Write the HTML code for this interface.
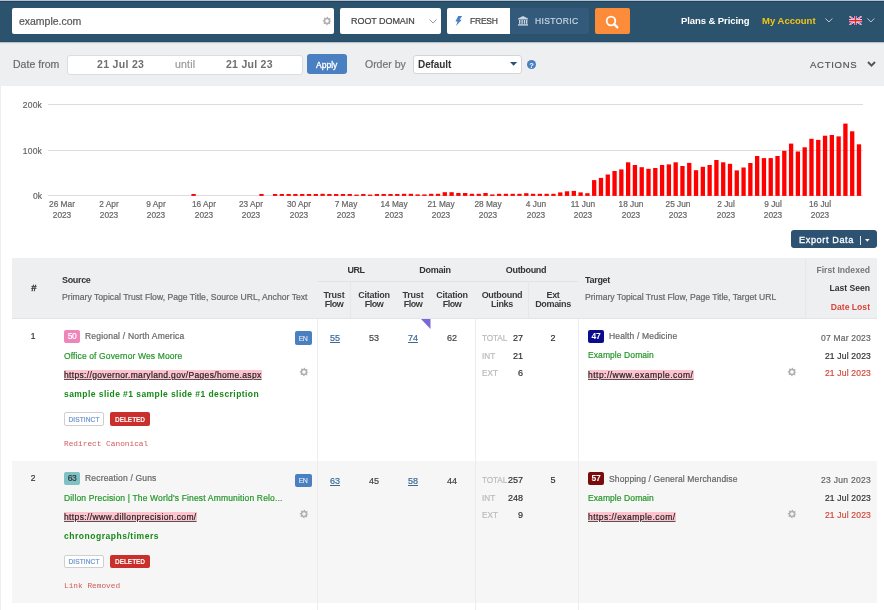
<!DOCTYPE html>
<html><head><meta charset="utf-8"><style>
html,body{margin:0;padding:0;width:884px;height:610px;overflow:hidden;background:#fff;font-family:'Liberation Sans', sans-serif;}
div.t{will-change:transform;}
</style></head><body>
<div style="position:absolute;left:0.00px;top:0.00px;width:884.00px;height:42.00px;background:#2c536d"></div><div style="position:absolute;left:0.00px;top:0.00px;width:884.00px;height:1.00px;background:#b6bec8"></div><div style="position:absolute;left:0.00px;top:1.00px;width:884.00px;height:1.00px;background:#1d4262"></div><div style="position:absolute;left:12.00px;top:8.00px;width:322.10px;height:26.00px;background:#fff;border-radius:2px"></div><div class="t" style="position:absolute;top:16.27px;left:19.40px;white-space:nowrap;line-height:10.5px;font-family:'Liberation Sans', sans-serif;font-size:10.5px;font-weight:normal;color:#555;letter-spacing:-0.023px;-webkit-text-stroke:0.2px #555;">example.com</div><div style="position:absolute;left:339.50px;top:8.00px;width:101.50px;height:26.00px;background:#fff;border-radius:2px"></div><div class="t" style="position:absolute;top:16.95px;left:351.30px;white-space:nowrap;line-height:9px;font-family:'Liberation Sans', sans-serif;font-size:9px;font-weight:normal;color:#444;letter-spacing:-0.059px;-webkit-text-stroke:0.2px #444;">ROOT DOMAIN</div><div style="position:absolute;left:447.00px;top:8.00px;width:63.00px;height:26.00px;background:#fff;border-radius:2px 0 0 2px"></div><div style="position:absolute;left:510.00px;top:8.00px;width:79.30px;height:26.00px;background:#33597b;border-radius:0 2px 2px 0"></div><div class="t" style="position:absolute;top:17.17px;left:470.40px;white-space:nowrap;line-height:8.5px;font-family:'Liberation Sans', sans-serif;font-size:8.5px;font-weight:normal;color:#444;letter-spacing:-0.223px;-webkit-text-stroke:0.2px #444;">FRESH</div><div class="t" style="position:absolute;top:17.17px;left:534.60px;white-space:nowrap;line-height:8.5px;font-family:'Liberation Sans', sans-serif;font-size:8.5px;font-weight:normal;color:#c9d5e1;letter-spacing:0.379px;-webkit-text-stroke:0.2px #c9d5e1;">HISTORIC</div><div style="position:absolute;left:595.20px;top:8.00px;width:34.70px;height:26.20px;background:#fd8c3a;border-radius:2px"></div><div class="t" style="position:absolute;top:16.23px;left:680.90px;white-space:nowrap;line-height:9.5px;font-family:'Liberation Sans', sans-serif;font-size:9.5px;font-weight:bold;color:#fff;letter-spacing:-0.079px;">Plans &amp; Pricing</div><div class="t" style="position:absolute;top:16.23px;left:762.20px;white-space:nowrap;line-height:9.5px;font-family:'Liberation Sans', sans-serif;font-size:9.5px;font-weight:bold;color:#f2c417;letter-spacing:0.012px;">My Account</div><div style="position:absolute;left:0.00px;top:42.00px;width:884.00px;height:44.00px;background:#eeeff1"></div><div style="position:absolute;left:0.00px;top:41.00px;width:884.00px;height:1.00px;background:#274b68"></div><div style="position:absolute;left:0.00px;top:42.00px;width:884.00px;height:1.00px;background:#bcc4cc"></div><div style="position:absolute;left:0.00px;top:43.00px;width:884.00px;height:1.00px;background:#e4e7ea"></div><div class="t" style="position:absolute;top:59.28px;left:12.60px;white-space:nowrap;line-height:10.5px;font-family:'Liberation Sans', sans-serif;font-size:10.5px;font-weight:normal;color:#6a6a6a;letter-spacing:0.032px;-webkit-text-stroke:0.2px #6a6a6a;">Date from</div><div style="position:absolute;left:66.80px;top:54.50px;width:236.40px;height:20.00px;background:#fff;border:1px solid #dcdde0;border-radius:3px;box-sizing:border-box"></div><div class="t" style="position:absolute;top:59.28px;left:97.40px;white-space:nowrap;line-height:10.5px;font-family:'Liberation Sans', sans-serif;font-size:10.5px;font-weight:bold;color:#6f6f6f;letter-spacing:0.314px;">21 Jul 23</div><div class="t" style="position:absolute;top:59.28px;left:174.70px;white-space:nowrap;line-height:10.5px;font-family:'Liberation Sans', sans-serif;font-size:10.5px;font-weight:normal;color:#999;letter-spacing:0.207px;-webkit-text-stroke:0.2px #999;">until</div><div class="t" style="position:absolute;top:59.28px;left:225.60px;white-space:nowrap;line-height:10.5px;font-family:'Liberation Sans', sans-serif;font-size:10.5px;font-weight:bold;color:#6f6f6f;letter-spacing:0.269px;">21 Jul 23</div><div style="position:absolute;left:307.30px;top:54.30px;width:40.00px;height:20.20px;background:#4a7fc1;border-radius:3px"></div><div class="t" style="position:absolute;top:61.18px;left:316.30px;white-space:nowrap;line-height:8.5px;font-family:'Liberation Sans', sans-serif;font-size:8.5px;font-weight:normal;color:#fff;letter-spacing:0.027px;-webkit-text-stroke:0.2px #fff;-webkit-text-stroke:0.3px #fff;">Apply</div><div class="t" style="position:absolute;top:59.28px;left:365.20px;white-space:nowrap;line-height:10.5px;font-family:'Liberation Sans', sans-serif;font-size:10.5px;font-weight:normal;color:#737373;letter-spacing:-0.020px;-webkit-text-stroke:0.2px #737373;">Order by</div><div style="position:absolute;left:413.40px;top:54.80px;width:108.30px;height:19.40px;background:#fff;border:1px solid #d4d5d8;border-radius:3px;box-sizing:border-box"></div><div class="t" style="position:absolute;top:60.00px;left:417.90px;white-space:nowrap;line-height:10px;font-family:'Liberation Sans', sans-serif;font-size:10px;font-weight:bold;color:#333;letter-spacing:-0.087px;">Default</div><div class="t" style="position:absolute;top:60.22px;left:810.00px;white-space:nowrap;line-height:9.5px;font-family:'Liberation Sans', sans-serif;font-size:9.5px;font-weight:normal;color:#555;letter-spacing:0.724px;-webkit-text-stroke:0.2px #555;">ACTIONS</div><div style="position:absolute;left:48.00px;top:104.10px;width:814.70px;height:1.00px;background:#dcdcdc"></div><div style="position:absolute;left:48.00px;top:149.90px;width:814.70px;height:1.00px;background:#dcdcdc"></div><div style="position:absolute;left:48.00px;top:194.90px;width:814.70px;height:1.00px;background:#dcdcdc"></div><div class="t" style="position:absolute;top:101.18px;left:-358.00px;width:400px;text-align:right;margin-right:0;white-space:nowrap;line-height:8.5px;font-family:'Liberation Sans', sans-serif;font-size:8.5px;font-weight:normal;color:#666;letter-spacing:0.191px;-webkit-text-stroke:0.2px #666;">200k</div><div class="t" style="position:absolute;top:147.18px;left:-358.00px;width:400px;text-align:right;margin-right:0;white-space:nowrap;line-height:8.5px;font-family:'Liberation Sans', sans-serif;font-size:8.5px;font-weight:normal;color:#666;letter-spacing:0.191px;-webkit-text-stroke:0.2px #666;">100k</div><div class="t" style="position:absolute;top:192.18px;left:-358.00px;width:400px;text-align:right;white-space:nowrap;line-height:8.5px;font-family:'Liberation Sans', sans-serif;font-size:8.5px;font-weight:normal;color:#666;-webkit-text-stroke:0.2px #666;">0k</div><div class="t" style="position:absolute;top:200.25px;left:-138.50px;width:400px;text-align:center;white-space:nowrap;line-height:8.3px;font-family:'Liberation Sans', sans-serif;font-size:8.3px;font-weight:normal;color:#666;-webkit-text-stroke:0.2px #666;">26 Mar</div><div class="t" style="position:absolute;top:211.25px;left:-138.50px;width:400px;text-align:center;white-space:nowrap;line-height:8.3px;font-family:'Liberation Sans', sans-serif;font-size:8.3px;font-weight:normal;color:#666;-webkit-text-stroke:0.2px #666;">2023</div><div class="t" style="position:absolute;top:200.25px;left:-91.07px;width:400px;text-align:center;white-space:nowrap;line-height:8.3px;font-family:'Liberation Sans', sans-serif;font-size:8.3px;font-weight:normal;color:#666;-webkit-text-stroke:0.2px #666;">2 Apr</div><div class="t" style="position:absolute;top:211.25px;left:-91.07px;width:400px;text-align:center;white-space:nowrap;line-height:8.3px;font-family:'Liberation Sans', sans-serif;font-size:8.3px;font-weight:normal;color:#666;-webkit-text-stroke:0.2px #666;">2023</div><div class="t" style="position:absolute;top:200.25px;left:-43.64px;width:400px;text-align:center;white-space:nowrap;line-height:8.3px;font-family:'Liberation Sans', sans-serif;font-size:8.3px;font-weight:normal;color:#666;-webkit-text-stroke:0.2px #666;">9 Apr</div><div class="t" style="position:absolute;top:211.25px;left:-43.64px;width:400px;text-align:center;white-space:nowrap;line-height:8.3px;font-family:'Liberation Sans', sans-serif;font-size:8.3px;font-weight:normal;color:#666;-webkit-text-stroke:0.2px #666;">2023</div><div class="t" style="position:absolute;top:200.25px;left:3.79px;width:400px;text-align:center;white-space:nowrap;line-height:8.3px;font-family:'Liberation Sans', sans-serif;font-size:8.3px;font-weight:normal;color:#666;-webkit-text-stroke:0.2px #666;">16 Apr</div><div class="t" style="position:absolute;top:211.25px;left:3.79px;width:400px;text-align:center;white-space:nowrap;line-height:8.3px;font-family:'Liberation Sans', sans-serif;font-size:8.3px;font-weight:normal;color:#666;-webkit-text-stroke:0.2px #666;">2023</div><div class="t" style="position:absolute;top:200.25px;left:51.22px;width:400px;text-align:center;white-space:nowrap;line-height:8.3px;font-family:'Liberation Sans', sans-serif;font-size:8.3px;font-weight:normal;color:#666;-webkit-text-stroke:0.2px #666;">23 Apr</div><div class="t" style="position:absolute;top:211.25px;left:51.22px;width:400px;text-align:center;white-space:nowrap;line-height:8.3px;font-family:'Liberation Sans', sans-serif;font-size:8.3px;font-weight:normal;color:#666;-webkit-text-stroke:0.2px #666;">2023</div><div class="t" style="position:absolute;top:200.25px;left:98.65px;width:400px;text-align:center;white-space:nowrap;line-height:8.3px;font-family:'Liberation Sans', sans-serif;font-size:8.3px;font-weight:normal;color:#666;-webkit-text-stroke:0.2px #666;">30 Apr</div><div class="t" style="position:absolute;top:211.25px;left:98.65px;width:400px;text-align:center;white-space:nowrap;line-height:8.3px;font-family:'Liberation Sans', sans-serif;font-size:8.3px;font-weight:normal;color:#666;-webkit-text-stroke:0.2px #666;">2023</div><div class="t" style="position:absolute;top:200.25px;left:146.08px;width:400px;text-align:center;white-space:nowrap;line-height:8.3px;font-family:'Liberation Sans', sans-serif;font-size:8.3px;font-weight:normal;color:#666;-webkit-text-stroke:0.2px #666;">7 May</div><div class="t" style="position:absolute;top:211.25px;left:146.08px;width:400px;text-align:center;white-space:nowrap;line-height:8.3px;font-family:'Liberation Sans', sans-serif;font-size:8.3px;font-weight:normal;color:#666;-webkit-text-stroke:0.2px #666;">2023</div><div class="t" style="position:absolute;top:200.25px;left:193.51px;width:400px;text-align:center;white-space:nowrap;line-height:8.3px;font-family:'Liberation Sans', sans-serif;font-size:8.3px;font-weight:normal;color:#666;-webkit-text-stroke:0.2px #666;">14 May</div><div class="t" style="position:absolute;top:211.25px;left:193.51px;width:400px;text-align:center;white-space:nowrap;line-height:8.3px;font-family:'Liberation Sans', sans-serif;font-size:8.3px;font-weight:normal;color:#666;-webkit-text-stroke:0.2px #666;">2023</div><div class="t" style="position:absolute;top:200.25px;left:240.94px;width:400px;text-align:center;white-space:nowrap;line-height:8.3px;font-family:'Liberation Sans', sans-serif;font-size:8.3px;font-weight:normal;color:#666;-webkit-text-stroke:0.2px #666;">21 May</div><div class="t" style="position:absolute;top:211.25px;left:240.94px;width:400px;text-align:center;white-space:nowrap;line-height:8.3px;font-family:'Liberation Sans', sans-serif;font-size:8.3px;font-weight:normal;color:#666;-webkit-text-stroke:0.2px #666;">2023</div><div class="t" style="position:absolute;top:200.25px;left:288.37px;width:400px;text-align:center;white-space:nowrap;line-height:8.3px;font-family:'Liberation Sans', sans-serif;font-size:8.3px;font-weight:normal;color:#666;-webkit-text-stroke:0.2px #666;">28 May</div><div class="t" style="position:absolute;top:211.25px;left:288.37px;width:400px;text-align:center;white-space:nowrap;line-height:8.3px;font-family:'Liberation Sans', sans-serif;font-size:8.3px;font-weight:normal;color:#666;-webkit-text-stroke:0.2px #666;">2023</div><div class="t" style="position:absolute;top:200.25px;left:335.80px;width:400px;text-align:center;white-space:nowrap;line-height:8.3px;font-family:'Liberation Sans', sans-serif;font-size:8.3px;font-weight:normal;color:#666;-webkit-text-stroke:0.2px #666;">4 Jun</div><div class="t" style="position:absolute;top:211.25px;left:335.80px;width:400px;text-align:center;white-space:nowrap;line-height:8.3px;font-family:'Liberation Sans', sans-serif;font-size:8.3px;font-weight:normal;color:#666;-webkit-text-stroke:0.2px #666;">2023</div><div class="t" style="position:absolute;top:200.25px;left:383.23px;width:400px;text-align:center;white-space:nowrap;line-height:8.3px;font-family:'Liberation Sans', sans-serif;font-size:8.3px;font-weight:normal;color:#666;-webkit-text-stroke:0.2px #666;">11 Jun</div><div class="t" style="position:absolute;top:211.25px;left:383.23px;width:400px;text-align:center;white-space:nowrap;line-height:8.3px;font-family:'Liberation Sans', sans-serif;font-size:8.3px;font-weight:normal;color:#666;-webkit-text-stroke:0.2px #666;">2023</div><div class="t" style="position:absolute;top:200.25px;left:430.66px;width:400px;text-align:center;white-space:nowrap;line-height:8.3px;font-family:'Liberation Sans', sans-serif;font-size:8.3px;font-weight:normal;color:#666;-webkit-text-stroke:0.2px #666;">18 Jun</div><div class="t" style="position:absolute;top:211.25px;left:430.66px;width:400px;text-align:center;white-space:nowrap;line-height:8.3px;font-family:'Liberation Sans', sans-serif;font-size:8.3px;font-weight:normal;color:#666;-webkit-text-stroke:0.2px #666;">2023</div><div class="t" style="position:absolute;top:200.25px;left:478.09px;width:400px;text-align:center;white-space:nowrap;line-height:8.3px;font-family:'Liberation Sans', sans-serif;font-size:8.3px;font-weight:normal;color:#666;-webkit-text-stroke:0.2px #666;">25 Jun</div><div class="t" style="position:absolute;top:211.25px;left:478.09px;width:400px;text-align:center;white-space:nowrap;line-height:8.3px;font-family:'Liberation Sans', sans-serif;font-size:8.3px;font-weight:normal;color:#666;-webkit-text-stroke:0.2px #666;">2023</div><div class="t" style="position:absolute;top:200.25px;left:525.52px;width:400px;text-align:center;white-space:nowrap;line-height:8.3px;font-family:'Liberation Sans', sans-serif;font-size:8.3px;font-weight:normal;color:#666;-webkit-text-stroke:0.2px #666;">2 Jul</div><div class="t" style="position:absolute;top:211.25px;left:525.52px;width:400px;text-align:center;white-space:nowrap;line-height:8.3px;font-family:'Liberation Sans', sans-serif;font-size:8.3px;font-weight:normal;color:#666;-webkit-text-stroke:0.2px #666;">2023</div><div class="t" style="position:absolute;top:200.25px;left:572.95px;width:400px;text-align:center;white-space:nowrap;line-height:8.3px;font-family:'Liberation Sans', sans-serif;font-size:8.3px;font-weight:normal;color:#666;-webkit-text-stroke:0.2px #666;">9 Jul</div><div class="t" style="position:absolute;top:211.25px;left:572.95px;width:400px;text-align:center;white-space:nowrap;line-height:8.3px;font-family:'Liberation Sans', sans-serif;font-size:8.3px;font-weight:normal;color:#666;-webkit-text-stroke:0.2px #666;">2023</div><div class="t" style="position:absolute;top:200.25px;left:620.38px;width:400px;text-align:center;white-space:nowrap;line-height:8.3px;font-family:'Liberation Sans', sans-serif;font-size:8.3px;font-weight:normal;color:#666;-webkit-text-stroke:0.2px #666;">16 Jul</div><div class="t" style="position:absolute;top:211.25px;left:620.38px;width:400px;text-align:center;white-space:nowrap;line-height:8.3px;font-family:'Liberation Sans', sans-serif;font-size:8.3px;font-weight:normal;color:#666;-webkit-text-stroke:0.2px #666;">2023</div><div style="position:absolute;left:791.20px;top:229.90px;width:85.60px;height:18.40px;background:#2d5272;border-radius:3px"></div><div class="t" style="position:absolute;top:235.88px;left:799.40px;white-space:nowrap;line-height:9.2px;font-family:'Liberation Sans', sans-serif;font-size:9.2px;font-weight:normal;color:#fff;letter-spacing:0.580px;-webkit-text-stroke:0.2px #fff;-webkit-text-stroke:0.3px #fff;">Export Data</div><div style="position:absolute;left:12.20px;top:258.00px;width:864.60px;height:60.50px;background:#eeeff1;border-bottom:1px solid #e3e4e7;box-sizing:border-box"></div><div class="t" style="position:absolute;top:283.23px;left:-166.50px;width:400px;text-align:center;white-space:nowrap;line-height:9.5px;font-family:'Liberation Sans', sans-serif;font-size:9.5px;font-weight:bold;color:#333;-webkit-text-stroke:0.3px #333;">#</div><div class="t" style="position:absolute;top:275.95px;left:61.80px;white-space:nowrap;line-height:9px;font-family:'Liberation Sans', sans-serif;font-size:9px;font-weight:bold;color:#333;letter-spacing:-0.336px;">Source</div><div class="t" style="position:absolute;top:293.09px;left:61.50px;white-space:nowrap;line-height:8.6px;font-family:'Liberation Sans', sans-serif;font-size:8.6px;font-weight:normal;color:#666;letter-spacing:0.020px;-webkit-text-stroke:0.2px #666;">Primary Topical Trust Flow, Page Title, Source URL, Anchor Text</div><div class="t" style="position:absolute;top:265.95px;left:156.30px;width:400px;text-align:center;white-space:nowrap;line-height:9px;font-family:'Liberation Sans', sans-serif;font-size:9px;font-weight:bold;color:#333;letter-spacing:-0.533px;">URL</div><div class="t" style="position:absolute;top:265.95px;left:235.30px;width:400px;text-align:center;white-space:nowrap;line-height:9px;font-family:'Liberation Sans', sans-serif;font-size:9px;font-weight:bold;color:#333;letter-spacing:-0.269px;">Domain</div><div class="t" style="position:absolute;top:265.95px;left:326.30px;width:400px;text-align:center;white-space:nowrap;line-height:9px;font-family:'Liberation Sans', sans-serif;font-size:9px;font-weight:bold;color:#333;letter-spacing:-0.336px;">Outbound</div><div class="t" style="position:absolute;top:290.95px;left:134.20px;width:400px;text-align:center;white-space:nowrap;line-height:9px;font-family:'Liberation Sans', sans-serif;font-size:9px;font-weight:bold;color:#3a3a3a;letter-spacing:-0.243px;">Trust</div><div class="t" style="position:absolute;top:299.95px;left:134.20px;width:400px;text-align:center;white-space:nowrap;line-height:9px;font-family:'Liberation Sans', sans-serif;font-size:9px;font-weight:bold;color:#3a3a3a;letter-spacing:-0.475px;">Flow</div><div class="t" style="position:absolute;top:290.95px;left:173.50px;width:400px;text-align:center;white-space:nowrap;line-height:9px;font-family:'Liberation Sans', sans-serif;font-size:9px;font-weight:bold;color:#3a3a3a;letter-spacing:-0.250px;">Citation</div><div class="t" style="position:absolute;top:299.95px;left:173.50px;width:400px;text-align:center;white-space:nowrap;line-height:9px;font-family:'Liberation Sans', sans-serif;font-size:9px;font-weight:bold;color:#3a3a3a;letter-spacing:-0.475px;">Flow</div><div class="t" style="position:absolute;top:290.95px;left:213.20px;width:400px;text-align:center;white-space:nowrap;line-height:9px;font-family:'Liberation Sans', sans-serif;font-size:9px;font-weight:bold;color:#3a3a3a;letter-spacing:-0.243px;">Trust</div><div class="t" style="position:absolute;top:299.95px;left:213.20px;width:400px;text-align:center;white-space:nowrap;line-height:9px;font-family:'Liberation Sans', sans-serif;font-size:9px;font-weight:bold;color:#3a3a3a;letter-spacing:-0.475px;">Flow</div><div class="t" style="position:absolute;top:290.95px;left:252.20px;width:400px;text-align:center;white-space:nowrap;line-height:9px;font-family:'Liberation Sans', sans-serif;font-size:9px;font-weight:bold;color:#3a3a3a;letter-spacing:-0.250px;">Citation</div><div class="t" style="position:absolute;top:299.95px;left:252.20px;width:400px;text-align:center;white-space:nowrap;line-height:9px;font-family:'Liberation Sans', sans-serif;font-size:9px;font-weight:bold;color:#3a3a3a;letter-spacing:-0.475px;">Flow</div><div class="t" style="position:absolute;top:290.95px;left:301.50px;width:400px;text-align:center;white-space:nowrap;line-height:9px;font-family:'Liberation Sans', sans-serif;font-size:9px;font-weight:bold;color:#3a3a3a;letter-spacing:-0.286px;">Outbound</div><div class="t" style="position:absolute;top:299.95px;left:301.50px;width:400px;text-align:center;white-space:nowrap;line-height:9px;font-family:'Liberation Sans', sans-serif;font-size:9px;font-weight:bold;color:#3a3a3a;letter-spacing:-0.323px;">Links</div><div class="t" style="position:absolute;top:290.95px;left:353.20px;width:400px;text-align:center;white-space:nowrap;line-height:9px;font-family:'Liberation Sans', sans-serif;font-size:9px;font-weight:bold;color:#3a3a3a;letter-spacing:-0.372px;">Ext</div><div class="t" style="position:absolute;top:299.95px;left:353.20px;width:400px;text-align:center;white-space:nowrap;line-height:9px;font-family:'Liberation Sans', sans-serif;font-size:9px;font-weight:bold;color:#3a3a3a;letter-spacing:-0.345px;">Domains</div><div style="position:absolute;left:317.30px;top:281.00px;width:260.40px;height:1.00px;background:#e2e3e6"></div><div style="position:absolute;left:350.00px;top:281.00px;width:1.00px;height:37.00px;background:#e6e7ea"></div><div style="position:absolute;left:528.30px;top:281.00px;width:1.00px;height:37.00px;background:#e6e7ea"></div><div style="position:absolute;left:804.60px;top:258.00px;width:1.00px;height:60.00px;background:#e6e7ea"></div><div class="t" style="position:absolute;top:275.95px;left:584.80px;white-space:nowrap;line-height:9px;font-family:'Liberation Sans', sans-serif;font-size:9px;font-weight:bold;color:#333;letter-spacing:-0.307px;">Target</div><div class="t" style="position:absolute;top:293.09px;left:584.80px;white-space:nowrap;line-height:8.6px;font-family:'Liberation Sans', sans-serif;font-size:8.6px;font-weight:normal;color:#666;-webkit-text-stroke:0.2px #666;">Primary Topical Trust Flow, Page Title, Target URL</div><div class="t" style="position:absolute;top:266.09px;left:470.20px;width:400px;text-align:right;margin-right:0;white-space:nowrap;line-height:8.6px;font-family:'Liberation Sans', sans-serif;font-size:8.6px;font-weight:bold;color:#777;letter-spacing:0.009px;">First Indexed</div><div class="t" style="position:absolute;top:284.09px;left:470.20px;width:400px;text-align:right;white-space:nowrap;line-height:8.6px;font-family:'Liberation Sans', sans-serif;font-size:8.6px;font-weight:bold;color:#333;">Last Seen</div><div class="t" style="position:absolute;top:303.09px;left:470.20px;width:400px;text-align:right;white-space:nowrap;line-height:8.6px;font-family:'Liberation Sans', sans-serif;font-size:8.6px;font-weight:bold;color:#d9443a;">Date Lost</div><div class="t" style="position:absolute;top:332.17px;left:-166.70px;width:400px;text-align:center;white-space:nowrap;line-height:8.5px;font-family:'Liberation Sans', sans-serif;font-size:8.5px;font-weight:normal;color:#333;-webkit-text-stroke:0.2px #333;">1</div><div style="position:absolute;left:64.30px;top:330.00px;width:15.80px;height:12.60px;background:#ef86bb;border-radius:2px"></div><div class="t" style="position:absolute;top:332.17px;left:-127.90px;width:400px;text-align:center;white-space:nowrap;line-height:8.5px;font-family:'Liberation Sans', sans-serif;font-size:8.5px;font-weight:normal;color:#fff;letter-spacing:-0.534px;-webkit-text-stroke:0.2px #fff;">50</div><div class="t" style="position:absolute;top:332.17px;left:85.20px;white-space:nowrap;line-height:8.5px;font-family:'Liberation Sans', sans-serif;font-size:8.5px;font-weight:normal;color:#666;letter-spacing:0.204px;-webkit-text-stroke:0.2px #666;">Regional / North America</div><div style="position:absolute;left:295.20px;top:331.20px;width:16.40px;height:13.50px;background:#4a7fc1;border-radius:2px"></div><div class="t" style="position:absolute;top:335.25px;left:103.30px;width:400px;text-align:center;white-space:nowrap;line-height:7px;font-family:'Liberation Sans', sans-serif;font-size:7px;font-weight:normal;color:#e6edf6;letter-spacing:-0.617px;-webkit-text-stroke:0.2px #e6edf6;-webkit-text-stroke:0.1px #e6edf6;">EN</div><div class="t" style="position:absolute;top:352.17px;left:64.40px;white-space:nowrap;line-height:8.5px;font-family:'Liberation Sans', sans-serif;font-size:8.5px;font-weight:normal;color:#24962a;letter-spacing:0.123px;-webkit-text-stroke:0.2px #24962a;">Office of Governor Wes Moore</div><div style="position:absolute;left:64.40px;top:370.00px;width:197.60px;height:9.00px;background:#ffc2cf"></div><div class="t" style="position:absolute;top:371.17px;left:64.40px;white-space:nowrap;line-height:8.5px;font-family:'Liberation Sans', sans-serif;font-size:8.5px;font-weight:normal;color:#222;letter-spacing:0.338px;-webkit-text-stroke:0.2px #222;text-decoration:underline;text-decoration-color:#555;">https://governor.maryland.gov/Pages/home.aspx</div><div class="t" style="position:absolute;top:390.17px;left:64.40px;white-space:nowrap;line-height:8.5px;font-family:'Liberation Sans', sans-serif;font-size:8.5px;font-weight:bold;color:#168a16;letter-spacing:0.439px;">sample slide #1 sample slide #1 description</div><div style="position:absolute;left:64.40px;top:412.20px;width:39.50px;height:13.60px;background:#fff;border:1px solid #cfcfcf;border-radius:2px;box-sizing:border-box"></div><div class="t" style="position:absolute;top:416.99px;left:-115.85px;width:400px;text-align:center;white-space:nowrap;line-height:6.6px;font-family:'Liberation Sans', sans-serif;font-size:6.6px;font-weight:normal;color:#6a93cc;letter-spacing:0.074px;-webkit-text-stroke:0.2px #6a93cc;">DISTINCT</div><div style="position:absolute;left:109.70px;top:412.20px;width:40.00px;height:13.60px;background:#c9302c;border-radius:2px"></div><div class="t" style="position:absolute;top:416.99px;left:-70.30px;width:400px;text-align:center;white-space:nowrap;line-height:6.6px;font-family:'Liberation Sans', sans-serif;font-size:6.6px;font-weight:bold;color:#fff;letter-spacing:-0.112px;">DELETED</div><div class="t" style="position:absolute;top:440.77px;left:64.40px;white-space:nowrap;line-height:7.8px;font-family:'Liberation Mono', monospace;font-size:7.8px;font-weight:normal;color:#d25a5a;">Redirect Canonical</div><div class="t" style="position:absolute;top:333.95px;left:134.50px;width:400px;text-align:center;white-space:nowrap;line-height:9px;font-family:'Liberation Sans', sans-serif;font-size:9px;font-weight:normal;color:#3b6a98;-webkit-text-stroke:0.2px #3b6a98;text-decoration:underline;">55</div><div class="t" style="position:absolute;top:333.95px;left:173.50px;width:400px;text-align:center;white-space:nowrap;line-height:9px;font-family:'Liberation Sans', sans-serif;font-size:9px;font-weight:normal;color:#444;-webkit-text-stroke:0.2px #444;">53</div><div class="t" style="position:absolute;top:333.95px;left:212.80px;width:400px;text-align:center;white-space:nowrap;line-height:9px;font-family:'Liberation Sans', sans-serif;font-size:9px;font-weight:normal;color:#3b6a98;-webkit-text-stroke:0.2px #3b6a98;text-decoration:underline;">74</div><div class="t" style="position:absolute;top:333.95px;left:252.10px;width:400px;text-align:center;white-space:nowrap;line-height:9px;font-family:'Liberation Sans', sans-serif;font-size:9px;font-weight:normal;color:#444;-webkit-text-stroke:0.2px #444;">62</div><div class="t" style="position:absolute;top:334.73px;left:481.50px;white-space:nowrap;line-height:8.2px;font-family:'Liberation Sans', sans-serif;font-size:8.2px;font-weight:normal;color:#bbb;letter-spacing:-0.088px;-webkit-text-stroke:0.2px #bbb;">TOTAL</div><div class="t" style="position:absolute;top:352.73px;left:481.50px;white-space:nowrap;line-height:8.2px;font-family:'Liberation Sans', sans-serif;font-size:8.2px;font-weight:normal;color:#bbb;-webkit-text-stroke:0.2px #bbb;">INT</div><div class="t" style="position:absolute;top:369.73px;left:481.50px;white-space:nowrap;line-height:8.2px;font-family:'Liberation Sans', sans-serif;font-size:8.2px;font-weight:normal;color:#bbb;-webkit-text-stroke:0.2px #bbb;">EXT</div><div class="t" style="position:absolute;top:333.95px;left:122.90px;width:400px;text-align:right;white-space:nowrap;line-height:9px;font-family:'Liberation Sans', sans-serif;font-size:9px;font-weight:normal;color:#333;-webkit-text-stroke:0.2px #333;">27</div><div class="t" style="position:absolute;top:351.95px;left:122.90px;width:400px;text-align:right;white-space:nowrap;line-height:9px;font-family:'Liberation Sans', sans-serif;font-size:9px;font-weight:normal;color:#333;-webkit-text-stroke:0.2px #333;">21</div><div class="t" style="position:absolute;top:368.95px;left:122.90px;width:400px;text-align:right;white-space:nowrap;line-height:9px;font-family:'Liberation Sans', sans-serif;font-size:9px;font-weight:normal;color:#333;-webkit-text-stroke:0.2px #333;">6</div><div class="t" style="position:absolute;top:333.95px;left:353.20px;width:400px;text-align:center;white-space:nowrap;line-height:9px;font-family:'Liberation Sans', sans-serif;font-size:9px;font-weight:normal;color:#333;-webkit-text-stroke:0.2px #333;">2</div><div style="position:absolute;left:588.20px;top:329.60px;width:15.60px;height:13.00px;background:#0b0b8e;border-radius:2px"></div><div class="t" style="position:absolute;top:332.17px;left:396.00px;width:400px;text-align:center;white-space:nowrap;line-height:8.5px;font-family:'Liberation Sans', sans-serif;font-size:8.5px;font-weight:bold;color:#fff;letter-spacing:-0.134px;">47</div><div class="t" style="position:absolute;top:332.17px;left:608.80px;white-space:nowrap;line-height:8.5px;font-family:'Liberation Sans', sans-serif;font-size:8.5px;font-weight:normal;color:#666;letter-spacing:0.155px;-webkit-text-stroke:0.2px #666;">Health / Medicine</div><div class="t" style="position:absolute;top:351.17px;left:588.20px;white-space:nowrap;line-height:8.5px;font-family:'Liberation Sans', sans-serif;font-size:8.5px;font-weight:normal;color:#24962a;letter-spacing:0.083px;-webkit-text-stroke:0.2px #24962a;">Example Domain</div><div style="position:absolute;left:588.20px;top:369.80px;width:105.40px;height:9.20px;background:#ffc2cf"></div><div class="t" style="position:absolute;top:371.17px;left:588.20px;white-space:nowrap;line-height:8.5px;font-family:'Liberation Sans', sans-serif;font-size:8.5px;font-weight:normal;color:#222;letter-spacing:0.475px;-webkit-text-stroke:0.2px #222;text-decoration:underline;text-decoration-color:#555;">http://www.example.com/</div><div class="t" style="position:absolute;top:334.17px;left:470.90px;width:400px;text-align:right;margin-right:0;white-space:nowrap;line-height:8.5px;font-family:'Liberation Sans', sans-serif;font-size:8.5px;font-weight:normal;color:#666;letter-spacing:0.206px;-webkit-text-stroke:0.2px #666;">07 Mar 2023</div><div class="t" style="position:absolute;top:352.17px;left:470.90px;width:400px;text-align:right;margin-right:0;white-space:nowrap;line-height:8.5px;font-family:'Liberation Sans', sans-serif;font-size:8.5px;font-weight:normal;color:#333;letter-spacing:0.195px;-webkit-text-stroke:0.2px #333;">21 Jul 2023</div><div class="t" style="position:absolute;top:369.17px;left:470.90px;width:400px;text-align:right;margin-right:0;white-space:nowrap;line-height:8.5px;font-family:'Liberation Sans', sans-serif;font-size:8.5px;font-weight:normal;color:#d04a3c;letter-spacing:0.195px;-webkit-text-stroke:0.2px #d04a3c;">21 Jul 2023</div><svg style="position:absolute;left:299.40px;top:367.00px" width="10" height="10" viewBox="-5 -5 10 10"><circle r="3.4" fill="none" stroke="#b0b0b0" stroke-width="1.6" stroke-dasharray="1.3 1.37" stroke-dashoffset="0.65"/><circle r="2.5" fill="none" stroke="#b0b0b0" stroke-width="1.5"/></svg><svg style="position:absolute;left:787.20px;top:367.00px" width="10" height="10" viewBox="-5 -5 10 10"><circle r="3.4" fill="none" stroke="#b0b0b0" stroke-width="1.6" stroke-dasharray="1.3 1.37" stroke-dashoffset="0.65"/><circle r="2.5" fill="none" stroke="#b0b0b0" stroke-width="1.5"/></svg><div style="position:absolute;left:12.10px;top:460.90px;width:864.90px;height:142.50px;background:#f6f6f6"></div><div class="t" style="position:absolute;top:474.17px;left:-166.70px;width:400px;text-align:center;white-space:nowrap;line-height:8.5px;font-family:'Liberation Sans', sans-serif;font-size:8.5px;font-weight:normal;color:#333;-webkit-text-stroke:0.2px #333;">2</div><div style="position:absolute;left:64.30px;top:472.40px;width:15.80px;height:12.60px;background:#80c1c6;border-radius:2px"></div><div class="t" style="position:absolute;top:474.17px;left:-127.90px;width:400px;text-align:center;white-space:nowrap;line-height:8.5px;font-family:'Liberation Sans', sans-serif;font-size:8.5px;font-weight:normal;color:#333;letter-spacing:-0.534px;-webkit-text-stroke:0.2px #333;">63</div><div class="t" style="position:absolute;top:474.17px;left:85.20px;white-space:nowrap;line-height:8.5px;font-family:'Liberation Sans', sans-serif;font-size:8.5px;font-weight:normal;color:#666;letter-spacing:0.176px;-webkit-text-stroke:0.2px #666;">Recreation / Guns</div><div style="position:absolute;left:295.20px;top:473.60px;width:16.40px;height:13.50px;background:#4a7fc1;border-radius:2px"></div><div class="t" style="position:absolute;top:477.25px;left:103.30px;width:400px;text-align:center;white-space:nowrap;line-height:7px;font-family:'Liberation Sans', sans-serif;font-size:7px;font-weight:normal;color:#e6edf6;letter-spacing:-0.617px;-webkit-text-stroke:0.2px #e6edf6;-webkit-text-stroke:0.1px #e6edf6;">EN</div><div class="t" style="position:absolute;top:494.17px;left:64.40px;white-space:nowrap;line-height:8.5px;font-family:'Liberation Sans', sans-serif;font-size:8.5px;font-weight:normal;color:#24962a;letter-spacing:0.162px;-webkit-text-stroke:0.2px #24962a;">Dillon Precision | The World&#x27;s Finest Ammunition Relo...</div><div style="position:absolute;left:64.40px;top:512.40px;width:132.60px;height:9.00px;background:#ffc2cf"></div><div class="t" style="position:absolute;top:513.17px;left:64.40px;white-space:nowrap;line-height:8.5px;font-family:'Liberation Sans', sans-serif;font-size:8.5px;font-weight:normal;color:#222;letter-spacing:0.379px;-webkit-text-stroke:0.2px #222;text-decoration:underline;text-decoration-color:#555;">https://www.dillonprecision.com/</div><div class="t" style="position:absolute;top:532.17px;left:64.40px;white-space:nowrap;line-height:8.5px;font-family:'Liberation Sans', sans-serif;font-size:8.5px;font-weight:bold;color:#168a16;letter-spacing:0.525px;">chronographs/timers</div><div style="position:absolute;left:64.40px;top:554.60px;width:39.50px;height:13.60px;background:#fff;border:1px solid #cfcfcf;border-radius:2px;box-sizing:border-box"></div><div class="t" style="position:absolute;top:558.99px;left:-115.85px;width:400px;text-align:center;white-space:nowrap;line-height:6.6px;font-family:'Liberation Sans', sans-serif;font-size:6.6px;font-weight:normal;color:#6a93cc;letter-spacing:0.074px;-webkit-text-stroke:0.2px #6a93cc;">DISTINCT</div><div style="position:absolute;left:109.70px;top:554.60px;width:40.00px;height:13.60px;background:#c9302c;border-radius:2px"></div><div class="t" style="position:absolute;top:558.99px;left:-70.30px;width:400px;text-align:center;white-space:nowrap;line-height:6.6px;font-family:'Liberation Sans', sans-serif;font-size:6.6px;font-weight:bold;color:#fff;letter-spacing:-0.112px;">DELETED</div><div class="t" style="position:absolute;top:582.77px;left:64.40px;white-space:nowrap;line-height:7.8px;font-family:'Liberation Mono', monospace;font-size:7.8px;font-weight:normal;color:#d25a5a;">Link Removed</div><div class="t" style="position:absolute;top:476.95px;left:134.50px;width:400px;text-align:center;white-space:nowrap;line-height:9px;font-family:'Liberation Sans', sans-serif;font-size:9px;font-weight:normal;color:#3b6a98;-webkit-text-stroke:0.2px #3b6a98;text-decoration:underline;">63</div><div class="t" style="position:absolute;top:476.95px;left:173.50px;width:400px;text-align:center;white-space:nowrap;line-height:9px;font-family:'Liberation Sans', sans-serif;font-size:9px;font-weight:normal;color:#444;-webkit-text-stroke:0.2px #444;">45</div><div class="t" style="position:absolute;top:476.95px;left:212.80px;width:400px;text-align:center;white-space:nowrap;line-height:9px;font-family:'Liberation Sans', sans-serif;font-size:9px;font-weight:normal;color:#3b6a98;-webkit-text-stroke:0.2px #3b6a98;text-decoration:underline;">58</div><div class="t" style="position:absolute;top:476.95px;left:252.10px;width:400px;text-align:center;white-space:nowrap;line-height:9px;font-family:'Liberation Sans', sans-serif;font-size:9px;font-weight:normal;color:#444;-webkit-text-stroke:0.2px #444;">44</div><div class="t" style="position:absolute;top:476.73px;left:481.50px;white-space:nowrap;line-height:8.2px;font-family:'Liberation Sans', sans-serif;font-size:8.2px;font-weight:normal;color:#bbb;letter-spacing:-0.088px;-webkit-text-stroke:0.2px #bbb;">TOTAL</div><div class="t" style="position:absolute;top:494.73px;left:481.50px;white-space:nowrap;line-height:8.2px;font-family:'Liberation Sans', sans-serif;font-size:8.2px;font-weight:normal;color:#bbb;-webkit-text-stroke:0.2px #bbb;">INT</div><div class="t" style="position:absolute;top:511.73px;left:481.50px;white-space:nowrap;line-height:8.2px;font-family:'Liberation Sans', sans-serif;font-size:8.2px;font-weight:normal;color:#bbb;-webkit-text-stroke:0.2px #bbb;">EXT</div><div class="t" style="position:absolute;top:475.95px;left:122.90px;width:400px;text-align:right;white-space:nowrap;line-height:9px;font-family:'Liberation Sans', sans-serif;font-size:9px;font-weight:normal;color:#333;-webkit-text-stroke:0.2px #333;">257</div><div class="t" style="position:absolute;top:493.95px;left:122.90px;width:400px;text-align:right;white-space:nowrap;line-height:9px;font-family:'Liberation Sans', sans-serif;font-size:9px;font-weight:normal;color:#333;-webkit-text-stroke:0.2px #333;">248</div><div class="t" style="position:absolute;top:510.95px;left:122.90px;width:400px;text-align:right;white-space:nowrap;line-height:9px;font-family:'Liberation Sans', sans-serif;font-size:9px;font-weight:normal;color:#333;-webkit-text-stroke:0.2px #333;">9</div><div class="t" style="position:absolute;top:475.95px;left:353.20px;width:400px;text-align:center;white-space:nowrap;line-height:9px;font-family:'Liberation Sans', sans-serif;font-size:9px;font-weight:normal;color:#333;-webkit-text-stroke:0.2px #333;">5</div><div style="position:absolute;left:588.20px;top:472.00px;width:15.60px;height:13.00px;background:#7a0b0b;border-radius:2px"></div><div class="t" style="position:absolute;top:474.17px;left:396.00px;width:400px;text-align:center;white-space:nowrap;line-height:8.5px;font-family:'Liberation Sans', sans-serif;font-size:8.5px;font-weight:bold;color:#fff;letter-spacing:-0.134px;">57</div><div class="t" style="position:absolute;top:475.17px;left:608.80px;white-space:nowrap;line-height:8.5px;font-family:'Liberation Sans', sans-serif;font-size:8.5px;font-weight:normal;color:#666;letter-spacing:0.144px;-webkit-text-stroke:0.2px #666;">Shopping / General Merchandise</div><div class="t" style="position:absolute;top:494.17px;left:588.20px;white-space:nowrap;line-height:8.5px;font-family:'Liberation Sans', sans-serif;font-size:8.5px;font-weight:normal;color:#24962a;letter-spacing:0.083px;-webkit-text-stroke:0.2px #24962a;">Example Domain</div><div style="position:absolute;left:588.20px;top:512.20px;width:87.50px;height:9.20px;background:#ffc2cf"></div><div class="t" style="position:absolute;top:513.17px;left:588.20px;white-space:nowrap;line-height:8.5px;font-family:'Liberation Sans', sans-serif;font-size:8.5px;font-weight:normal;color:#222;letter-spacing:0.454px;-webkit-text-stroke:0.2px #222;text-decoration:underline;text-decoration-color:#555;">https://example.com/</div><div class="t" style="position:absolute;top:476.17px;left:470.90px;width:400px;text-align:right;margin-right:0;white-space:nowrap;line-height:8.5px;font-family:'Liberation Sans', sans-serif;font-size:8.5px;font-weight:normal;color:#666;letter-spacing:0.291px;-webkit-text-stroke:0.2px #666;">23 Jun 2023</div><div class="t" style="position:absolute;top:494.17px;left:470.90px;width:400px;text-align:right;margin-right:0;white-space:nowrap;line-height:8.5px;font-family:'Liberation Sans', sans-serif;font-size:8.5px;font-weight:normal;color:#333;letter-spacing:0.195px;-webkit-text-stroke:0.2px #333;">21 Jul 2023</div><div class="t" style="position:absolute;top:511.17px;left:470.90px;width:400px;text-align:right;margin-right:0;white-space:nowrap;line-height:8.5px;font-family:'Liberation Sans', sans-serif;font-size:8.5px;font-weight:normal;color:#d04a3c;letter-spacing:0.195px;-webkit-text-stroke:0.2px #d04a3c;">21 Jul 2023</div><svg style="position:absolute;left:299.40px;top:509.40px" width="10" height="10" viewBox="-5 -5 10 10"><circle r="3.4" fill="none" stroke="#b0b0b0" stroke-width="1.6" stroke-dasharray="1.3 1.37" stroke-dashoffset="0.65"/><circle r="2.5" fill="none" stroke="#b0b0b0" stroke-width="1.5"/></svg><svg style="position:absolute;left:787.20px;top:509.40px" width="10" height="10" viewBox="-5 -5 10 10"><circle r="3.4" fill="none" stroke="#b0b0b0" stroke-width="1.6" stroke-dasharray="1.3 1.37" stroke-dashoffset="0.65"/><circle r="2.5" fill="none" stroke="#b0b0b0" stroke-width="1.5"/></svg><div style="position:absolute;left:0.00px;top:86.00px;width:1.00px;height:524.00px;background:#efefef"></div><div style="position:absolute;left:316.80px;top:318.50px;width:1.00px;height:291.50px;background:#ececec"></div><div style="position:absolute;left:474.90px;top:318.50px;width:1.00px;height:291.50px;background:#ececec"></div><div style="position:absolute;left:578.00px;top:318.50px;width:1.00px;height:291.50px;background:#ececec"></div><svg style="position:absolute;left:0;top:0" width="884" height="230" viewBox="0 0 884 230"><g fill="#ff0000"><rect x="782.16" y="150.80" width="4.3" height="45.10"/><rect x="788.95" y="143.60" width="4.3" height="52.30"/><rect x="795.74" y="151.50" width="4.3" height="44.40"/><rect x="802.53" y="147.30" width="4.3" height="48.60"/><rect x="809.32" y="138.80" width="4.3" height="57.10"/><rect x="816.11" y="139.90" width="4.3" height="56.00"/><rect x="822.90" y="135.70" width="4.3" height="60.20"/><rect x="829.69" y="135.00" width="4.3" height="60.90"/><rect x="836.48" y="136.40" width="4.3" height="59.50"/><rect x="843.27" y="123.60" width="4.3" height="72.30"/><rect x="850.06" y="131.30" width="4.3" height="64.60"/><rect x="856.85" y="144.30" width="4.3" height="51.60"/><rect x="721.05" y="162.30" width="4.3" height="33.60"/><rect x="727.84" y="163.80" width="4.3" height="32.10"/><rect x="734.63" y="170.40" width="4.3" height="25.50"/><rect x="741.42" y="167.50" width="4.3" height="28.40"/><rect x="748.21" y="163.00" width="4.3" height="32.90"/><rect x="755.00" y="156.00" width="4.3" height="39.90"/><rect x="761.79" y="158.10" width="4.3" height="37.80"/><rect x="768.58" y="158.10" width="4.3" height="37.80"/><rect x="775.37" y="156.00" width="4.3" height="39.90"/><rect x="653.15" y="168.00" width="4.3" height="27.90"/><rect x="659.94" y="165.00" width="4.3" height="30.90"/><rect x="666.73" y="164.40" width="4.3" height="31.50"/><rect x="673.52" y="162.30" width="4.3" height="33.60"/><rect x="680.31" y="166.00" width="4.3" height="29.90"/><rect x="687.10" y="162.90" width="4.3" height="33.00"/><rect x="693.89" y="170.20" width="4.3" height="25.70"/><rect x="700.68" y="166.80" width="4.3" height="29.10"/><rect x="707.47" y="165.00" width="4.3" height="30.90"/><rect x="714.26" y="160.00" width="4.3" height="35.90"/><rect x="592.04" y="180.10" width="4.3" height="15.80"/><rect x="598.83" y="177.90" width="4.3" height="18.00"/><rect x="605.62" y="174.50" width="4.3" height="21.40"/><rect x="612.41" y="171.00" width="4.3" height="24.90"/><rect x="619.20" y="169.40" width="4.3" height="26.50"/><rect x="625.99" y="162.30" width="4.3" height="33.60"/><rect x="632.78" y="165.00" width="4.3" height="30.90"/><rect x="639.57" y="167.20" width="4.3" height="28.70"/><rect x="646.36" y="168.80" width="4.3" height="27.10"/><rect x="496.98" y="193.80" width="4.3" height="2.10"/><rect x="503.77" y="193.80" width="4.3" height="2.10"/><rect x="510.56" y="193.80" width="4.3" height="2.10"/><rect x="517.35" y="193.80" width="4.3" height="2.10"/><rect x="524.14" y="193.20" width="4.3" height="2.70"/><rect x="530.93" y="193.80" width="4.3" height="2.10"/><rect x="537.72" y="193.80" width="4.3" height="2.10"/><rect x="544.51" y="193.80" width="4.3" height="2.10"/><rect x="551.30" y="193.80" width="4.3" height="2.10"/><rect x="558.09" y="192.40" width="4.3" height="3.50"/><rect x="564.88" y="191.30" width="4.3" height="4.60"/><rect x="571.67" y="190.90" width="4.3" height="5.00"/><rect x="578.46" y="192.40" width="4.3" height="3.50"/><rect x="585.25" y="193.20" width="4.3" height="2.70"/><rect x="401.92" y="193.80" width="4.3" height="2.10"/><rect x="408.71" y="193.80" width="4.3" height="2.10"/><rect x="415.50" y="194.40" width="4.3" height="1.50"/><rect x="422.29" y="194.40" width="4.3" height="1.50"/><rect x="429.08" y="193.80" width="4.3" height="2.10"/><rect x="435.87" y="193.80" width="4.3" height="2.10"/><rect x="442.66" y="192.20" width="4.3" height="3.70"/><rect x="449.45" y="192.20" width="4.3" height="3.70"/><rect x="456.24" y="193.00" width="4.3" height="2.90"/><rect x="463.03" y="193.00" width="4.3" height="2.90"/><rect x="469.82" y="193.80" width="4.3" height="2.10"/><rect x="476.61" y="193.80" width="4.3" height="2.10"/><rect x="483.40" y="193.00" width="4.3" height="2.90"/><rect x="490.19" y="194.40" width="4.3" height="1.50"/><rect x="327.23" y="194.00" width="4.3" height="1.90"/><rect x="334.02" y="194.00" width="4.3" height="1.90"/><rect x="340.81" y="194.00" width="4.3" height="1.90"/><rect x="347.60" y="194.00" width="4.3" height="1.90"/><rect x="354.39" y="194.60" width="4.3" height="1.30"/><rect x="361.18" y="194.00" width="4.3" height="1.90"/><rect x="367.97" y="194.60" width="4.3" height="1.30"/><rect x="374.76" y="194.00" width="4.3" height="1.90"/><rect x="381.55" y="194.00" width="4.3" height="1.90"/><rect x="388.34" y="194.00" width="4.3" height="1.90"/><rect x="395.13" y="194.00" width="4.3" height="1.90"/><rect x="259.33" y="194.00" width="4.3" height="1.90"/><rect x="272.91" y="194.00" width="4.3" height="1.90"/><rect x="279.70" y="194.00" width="4.3" height="1.90"/><rect x="286.49" y="194.00" width="4.3" height="1.90"/><rect x="293.28" y="194.00" width="4.3" height="1.90"/><rect x="300.07" y="194.00" width="4.3" height="1.90"/><rect x="306.86" y="194.00" width="4.3" height="1.90"/><rect x="313.65" y="194.00" width="4.3" height="1.90"/><rect x="320.44" y="193.80" width="4.3" height="2.10"/><rect x="191.43" y="194.00" width="4.3" height="1.90"/></g></svg><svg style="position:absolute;left:322.40px;top:15.80px" width="10" height="10" viewBox="-5 -5 10 10"><circle r="3.4" fill="none" stroke="#b0b0b0" stroke-width="1.6" stroke-dasharray="1.3 1.37" stroke-dashoffset="0.65"/><circle r="2.5" fill="none" stroke="#b0b0b0" stroke-width="1.5"/></svg><svg style="position:absolute;left:429px;top:18.5px;overflow:visible" width="8" height="5" viewBox="0 0 8 5"><polyline points="0.5,0.5 4,4 7.5,0.5" fill="none" stroke="#9a9a9a" stroke-width="1"/></svg><svg style="position:absolute;left:454.9px;top:15.9px;overflow:visible" width="7.2" height="10" viewBox="0 0 7.2 10"><polygon points="3.2,0 7.2,0 4.6,3.8 6.8,3.8 1,10 2.6,5.4 0.4,5.4" fill="#4a7fc1"/></svg><svg style="position:absolute;left:517.7px;top:15.6px;overflow:visible" width="10" height="9.6" viewBox="0 0 10 9.6"><g fill="#c9d5e1"><polygon points="5,0 10,2.6 10,3.4 0,3.4 0,2.6"/><rect x="1" y="4" width="1.4" height="3.8"/><rect x="3.4" y="4" width="1.4" height="3.8"/><rect x="5.8" y="4" width="1.4" height="3.8"/><rect x="8" y="4" width="1.4" height="3.8"/><rect x="0" y="8.2" width="10" height="1.4"/></g></svg><svg style="position:absolute;left:605px;top:15px;overflow:visible" width="14" height="14" viewBox="0 0 14 14"><circle cx="6" cy="6" r="4.3" fill="none" stroke="#fff" stroke-width="1.8"/><line x1="9.1" y1="9.1" x2="12.4" y2="12.4" stroke="#fff" stroke-width="2.2" stroke-linecap="round"/></svg><svg style="position:absolute;left:825px;top:18px;overflow:visible" width="8" height="4.6" viewBox="0 0 8 4.6"><polyline points="0.5,0.5 3.9,4 7.3,0.5" fill="none" stroke="#c3ccd6" stroke-width="1"/></svg><svg style="position:absolute;left:867px;top:18px;overflow:visible" width="8" height="4.6" viewBox="0 0 8 4.6"><polyline points="0.5,0.5 3.9,4 7.3,0.5" fill="none" stroke="#c3ccd6" stroke-width="1"/></svg><svg style="position:absolute;left:849px;top:15.8px;overflow:hidden" width="13" height="9.2" viewBox="0 0 60 30" preserveAspectRatio="none"><rect width="60" height="30" fill="#1b3f9c"/><path d="M0,0 L60,30 M60,0 L0,30" stroke="#fff" stroke-width="6"/><path d="M0,0 L60,30 M60,0 L0,30" stroke="#e0202a" stroke-width="2.5"/><path d="M30,0 V30 M0,15 H60" stroke="#fff" stroke-width="10"/><path d="M30,0 V30 M0,15 H60" stroke="#e0202a" stroke-width="6"/></svg><svg style="position:absolute;left:510.2px;top:62px;overflow:visible" width="7.2" height="3.8" viewBox="0 0 7.2 3.8"><polygon points="0,0 7.2,0 3.6,3.8" fill="#2d5272"/></svg><svg style="position:absolute;left:527px;top:60px;overflow:visible" width="9" height="9" viewBox="0 0 9 9"><circle cx="4.5" cy="4.5" r="4.5" fill="#4a7fc1"/><text x="4.5" y="7.6" text-anchor="middle" font-family="Liberation Sans" font-weight="bold" font-size="7.5" fill="#fff">?</text></svg><svg style="position:absolute;left:866.8px;top:61.2px;overflow:visible" width="9" height="6" viewBox="0 0 9 6"><polyline points="1,1 4.5,4.6 8,1" fill="none" stroke="#555" stroke-width="2"/></svg><div style="position:absolute;left:859.60px;top:236.10px;width:1.00px;height:8.70px;background:#dfe5ea"></div><svg style="position:absolute;left:864.9px;top:238.5px;overflow:visible" width="4.8" height="3" viewBox="0 0 4.8 3"><polygon points="0,0 4.6,0 2.3,2.8" fill="#fff"/></svg><svg style="position:absolute;left:420.5px;top:318.6px;overflow:visible" width="9.5" height="10" viewBox="0 0 9.5 10"><polygon points="0,0 9.5,0 9.5,10" fill="#7a68d6"/></svg>


</body></html>
